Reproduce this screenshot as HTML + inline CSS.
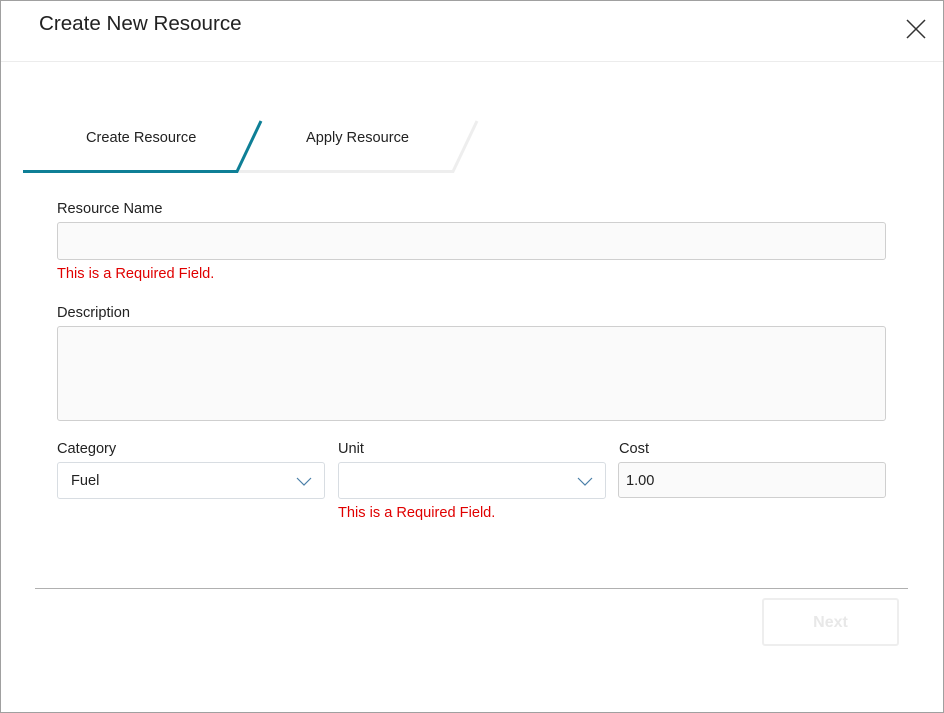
<!DOCTYPE html>
<html><head><meta charset="utf-8"><style>
*{box-sizing:border-box;margin:0;padding:0}
body{width:944px;height:713px;background:#fff;font-family:"Liberation Sans",sans-serif;color:#222;position:relative;overflow:hidden}
.frame{position:absolute;left:0;top:0;width:944px;height:713px;border:1px solid #a0a0a0}
.abs{position:absolute}
.title{left:39px;top:12px;font-size:20.6px;color:#222}
.hr1{left:1px;top:61px;width:942px;height:1px;background:#ececec}
.lbl{font-size:14.6px;color:#222}
.inp{border:1px solid #cfcfcf;border-radius:3px;background:#fafafa}
.err{font-size:14.6px;color:#e00000}
.sel{border:1px solid #d8dde2;border-radius:3px;background:#fff}
</style></head><body>
<div class="frame"></div>
<div class="abs title">Create New Resource</div>
<svg class="abs" style="left:906px;top:19px" width="20" height="20" viewBox="0 0 20 20"><path d="M1 1L19 19M19 1L1 19" stroke="#333" stroke-width="1.5" fill="none"/></svg>
<div class="abs hr1"></div>
<svg class="abs" style="left:0;top:115px" width="500" height="65">
<path d="M237 56.5L453 56.5L477 6" stroke="#eeeeee" stroke-width="3" fill="none"/>
<path d="M23 56.5L237 56.5L261 6" stroke="#0e7f96" stroke-width="3" fill="none"/>
</svg>
<div class="abs lbl" style="left:86px;top:130px">Create Resource</div>
<div class="abs lbl" style="left:306px;top:130px">Apply Resource</div>
<div class="abs lbl" style="left:57px;top:201px">Resource Name</div>
<div class="abs inp" style="left:57px;top:222px;width:829px;height:38px"></div>
<div class="abs err" style="left:57px;top:266px">This is a Required Field.</div>
<div class="abs lbl" style="left:57px;top:305px">Description</div>
<div class="abs inp" style="left:57px;top:326px;width:829px;height:95px"></div>
<div class="abs lbl" style="left:57px;top:441px">Category</div>
<div class="abs lbl" style="left:338px;top:441px">Unit</div>
<div class="abs lbl" style="left:619px;top:441px">Cost</div>
<div class="abs sel" style="left:57px;top:462px;width:268px;height:37px"><span class="abs lbl" style="left:13px;top:10px">Fuel</span>
<svg class="abs" style="left:238px;top:14px" width="16" height="10"><path d="M1 1L8 8L15 1" stroke="#4a7fa8" stroke-width="1.2" fill="none"/></svg></div>
<div class="abs sel" style="left:338px;top:462px;width:268px;height:37px">
<svg class="abs" style="left:238px;top:14px" width="16" height="10"><path d="M1 1L8 8L15 1" stroke="#4a7fa8" stroke-width="1.2" fill="none"/></svg></div>
<div class="abs inp" style="left:618px;top:462px;width:268px;height:36px"><span class="abs lbl" style="left:7px;top:10px">1.00</span></div>
<div class="abs err" style="left:338px;top:505px">This is a Required Field.</div>
<div class="abs" style="left:35px;top:588px;width:873px;height:1px;background:#b0b0b0"></div>
<div class="abs" style="left:762px;top:598px;width:137px;height:48px;border:2px solid #eeeeee;border-radius:3px;text-align:center;line-height:46px;font-weight:bold;font-size:16px;color:#e8e8e8">Next</div>
</body></html>
